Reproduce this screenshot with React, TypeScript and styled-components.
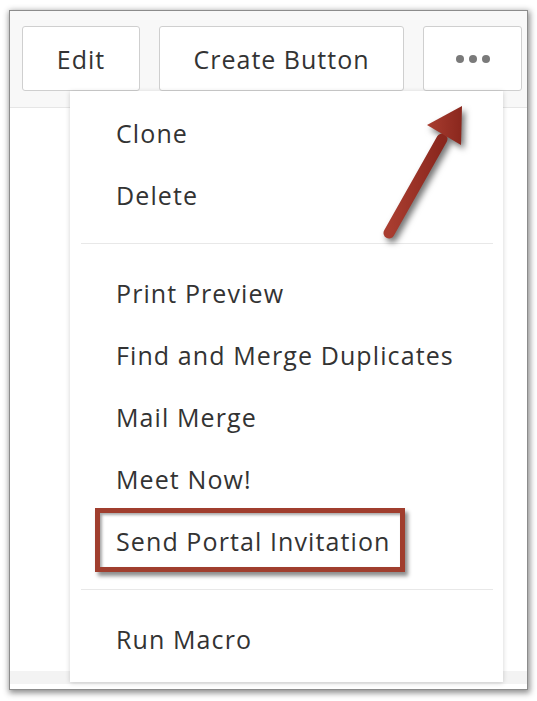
import { FC } from "react";

import styled, { createGlobalStyle } from "styled-components";

type TMenuItem = {
  label: string;
  highlighted?: boolean;
};

const GlobalStyle = createGlobalStyle`
  html, body {
    margin: 0;
    padding: 0;
    background: #ffffff;
  }
  body {
    font-family: "Open Sans", Lato, "Liberation Sans", sans-serif;
    color: #333333;
  }
`;

const Page = styled.div`
  width: 537px;
  height: 701px;
  padding: 10px 0 0 9px;
  box-sizing: border-box;
`;

const Frame = styled.div`
  position: relative;
  width: 519px;
  height: 680px;
  box-sizing: border-box;
  border: 1px solid #8c8c8c;
  box-shadow: 1px 2px 6px 1px rgba(0, 0, 0, 0.45);
  background: #ffffff;
  display: flex;
  flex-direction: column;
`;

const Header = styled.div`
  height: 97px;
  box-sizing: border-box;
  padding: 15px 5px 0 12px;
  background: #f8f8f8;
  border-bottom: 1px solid #e6e6e6;
  display: flex;
  align-items: flex-start;
  gap: 19px;
`;

const Button = styled.button<{ $width: number }>`
  width: ${(p) => p.$width}px;
  height: 65px;
  box-sizing: border-box;
  border: 1px solid #cfcfcf;
  border-radius: 3px;
  background: #ffffff;
  font-family: inherit;
  font-size: 25px;
  letter-spacing: 1px;
  color: #333333;
  padding: 0;
  display: flex;
  align-items: center;
  justify-content: center;
  gap: 5px;
`;

const Dot = styled.span`
  width: 8px;
  height: 8px;
  border-radius: 50%;
  background: #7a7a7a;
`;

const Body = styled.div`
  flex: 1;
`;

const Footer = styled.div`
  height: 13px;
  margin-bottom: 5px;
  background: #f3f3f3;
`;

const Menu = styled.ul`
  position: absolute;
  left: 60px;
  top: 80px;
  width: 433px;
  height: 591px;
  box-sizing: border-box;
  margin: 0;
  padding: 11px 0 10px;
  list-style: none;
  background: #ffffff;
  box-shadow: 0 1px 5px rgba(0, 0, 0, 0.18);
`;

const Item = styled.li<{ $highlighted?: boolean }>`
  position: relative;
  height: 62px;
  padding-left: 46px;
  display: flex;
  align-items: center;
  font-size: 25px;
  letter-spacing: 1.1px;
  color: #333333;

  ${(p) =>
    p.$highlighted &&
    `
    &::after {
      content: "";
      position: absolute;
      left: 25px;
      top: -2px;
      width: 310px;
      height: 64px;
      box-sizing: border-box;
      border: 5px solid #a03e2e;
      box-shadow: 3px 4px 4px rgba(0, 0, 0, 0.45),
        inset 2px 2px 3px rgba(0, 0, 0, 0.35);
    }
  `}
`;

const Divider = styled.li`
  height: 1px;
  margin: 17px 10px 18px 11px;
  background: #e8e8e8;
`;

const Arrow = styled.svg`
  position: absolute;
  left: 370px;
  top: 90px;
  overflow: visible;
  filter: drop-shadow(3px 4px 3px rgba(0, 0, 0, 0.55));
`;

const topItems: TMenuItem[] = [{ label: "Clone" }, { label: "Delete" }];

const middleItems: TMenuItem[] = [
  { label: "Print Preview" },
  { label: "Find and Merge Duplicates" },
  { label: "Mail Merge" },
  { label: "Meet Now!" },
  { label: "Send Portal Invitation", highlighted: true },
];

const bottomItems: TMenuItem[] = [{ label: "Run Macro" }];

const renderItems = (items: TMenuItem[]) =>
  items.map((item) => (
    <Item key={item.label} $highlighted={item.highlighted}>
      {item.label}
    </Item>
  ));

const App: FC = () => {
  return (
    <>
      <GlobalStyle />
      <Page>
        <Frame>
          <Header>
            <Button $width={118}>Edit</Button>
            <Button $width={245}>Create Button</Button>
            <Button $width={99}>
              <Dot />
              <Dot />
              <Dot />
            </Button>
          </Header>
          <Body />
          <Footer />

          <Menu>
            {renderItems(topItems)}
            <Divider />
            {renderItems(middleItems)}
            <Divider />
            {renderItems(bottomItems)}
          </Menu>

          {/* annotation arrow, page coords minus frame offset */}
          <Arrow width="110" height="160" viewBox="370 90 110 160">
            <defs>
              <linearGradient id="arrowFill" x1="0" y1="0" x2="1" y2="0">
                <stop offset="0" stopColor="#a93d30" />
                <stop offset="1" stopColor="#8a271d" />
              </linearGradient>
            </defs>
            <line
              x1="379"
              y1="222"
              x2="432"
              y2="128"
              stroke="url(#arrowFill)"
              strokeWidth="11"
              strokeLinecap="round"
            />
            <polygon points="452,95 417,114 451,134" fill="url(#arrowFill)" />
          </Arrow>
        </Frame>
      </Page>
    </>
  );
};

export default App;
